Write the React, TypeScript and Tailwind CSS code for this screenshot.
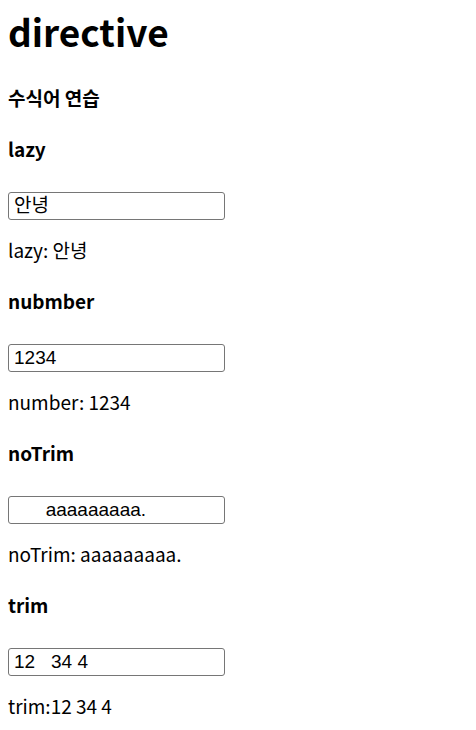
import React from "react";

const BODY_FONT = "font-['Noto_Sans_CJK_KR','Noto_Sans',sans-serif]";
const INPUT_FONT = "font-['Liberation_Sans','Noto_Sans_CJK_KR',sans-serif]";

type Section = {
  title: string;
  value: string;
  output: string;
};

const sections: Section[] = [
  { title: "lazy", value: "안녕", output: "lazy: 안녕" },
  { title: "nubmber", value: "1234", output: "number: 1234" },
  { title: "noTrim", value: "      aaaaaaaaa.", output: "noTrim: aaaaaaaaa." },
  { title: "trim", value: "12   34 4", output: "trim:12 34 4" },
];

function ModifierSection({ title, value, output }: Section) {
  return (
    <div className="mt-[27px]">
      <h4 className="text-[19px] leading-[24px] font-bold">{title}</h4>
      <input
        type="text"
        defaultValue={value}
        className={`${INPUT_FONT} mt-[31px] block w-[217px] h-[28px] border border-[#767676] rounded-[3px] bg-white px-[5px] text-[19px] text-black outline-none`}
      />
      <p className="mt-[18px] text-[19px] leading-[24px]">{output}</p>
    </div>
  );
}

export default function App() {
  return (
    <div className={`${BODY_FONT} min-h-[730px] bg-white px-2 text-black`}>
      <h1 className="pt-[8px] text-[37px] leading-[46px] font-bold">directive</h1>
      <h4 className="mt-[32px] text-[19px] leading-[24px] font-bold">수식어 연습</h4>
      {sections.map((s) => (
        <ModifierSection key={s.title} {...s} />
      ))}
    </div>
  );
}
